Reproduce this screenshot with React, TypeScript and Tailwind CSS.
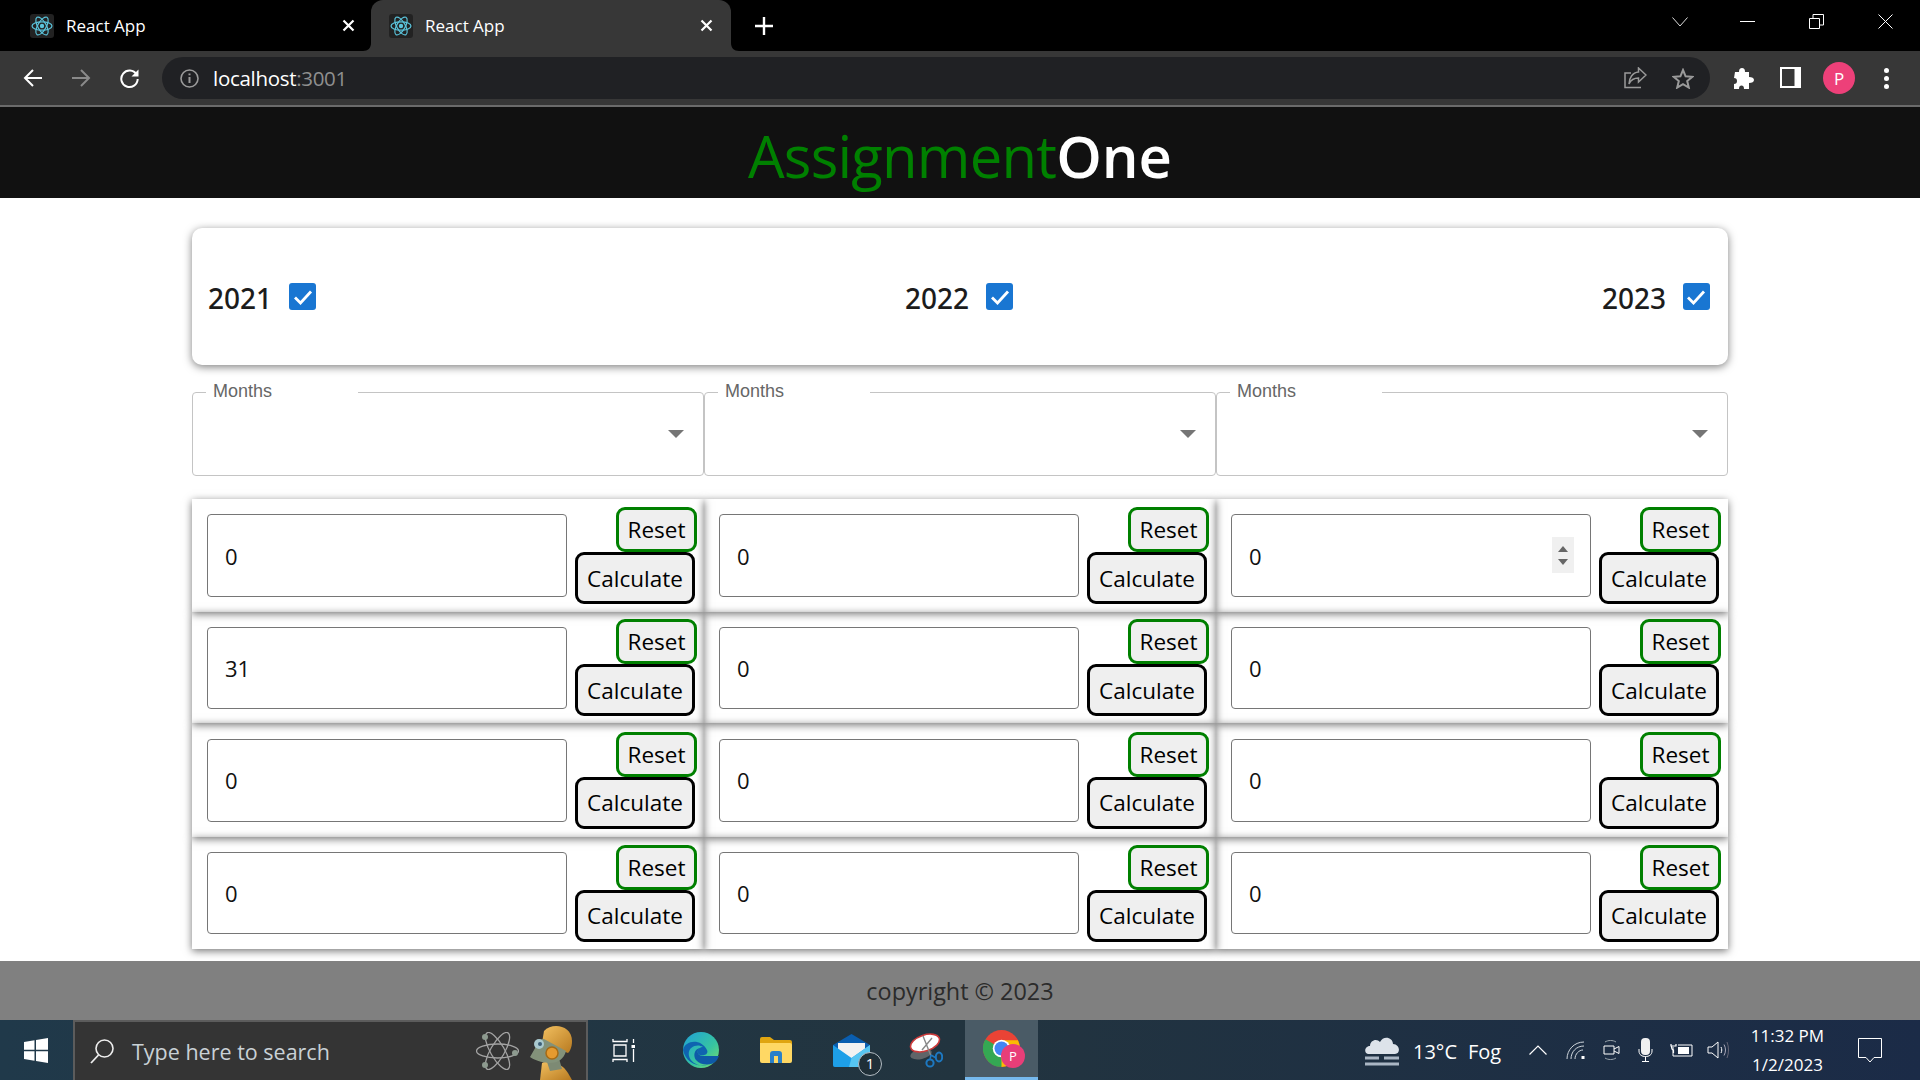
const sans = "font-['Open_Sans',sans-serif]";

function ReactIcon() {
  return (
    <svg width={24} height={24} viewBox="0 0 24 24" fill="none" className="shrink-0">
      <rect width={24} height={24} rx={3} fill="#222" />
      <g stroke="#5bc4dc" strokeWidth={1.2}>
        <ellipse cx={12} cy={12} rx={10} ry={4.2} />
        <ellipse cx={12} cy={12} rx={10} ry={4.2} transform="rotate(60 12 12)" />
        <ellipse cx={12} cy={12} rx={10} ry={4.2} transform="rotate(120 12 12)" />
      </g>
      <circle cx={12} cy={12} r={2.2} fill="#5bc4dc" />
    </svg>
  );
}

function CloseX() {
  return (
    <svg width={13} height={13} viewBox="0 0 13 13" className="shrink-0">
      <path d="M1.5 1.5L11.5 11.5M11.5 1.5L1.5 11.5" stroke="#fff" strokeWidth={2.2} />
    </svg>
  );
}

function TabBar() {
  return (
    <div className="flex h-[51px] bg-black text-white">
      <div className="flex w-[371px] items-center pl-[30px]">
        <ReactIcon />
        <span className="ml-3 w-[276px] text-[17px] leading-none">React App</span>
        <CloseX />
      </div>
      <div className="relative flex w-[360px] items-center rounded-t-[12px] bg-[#373737] pl-[18px]">
        <svg width={8} height={8} viewBox="0 0 8 8" className="absolute -left-2 bottom-0">
          <path d="M8 0V8H0C5 8 8 5 8 0Z" fill="#373737" />
        </svg>
        <svg width={8} height={8} viewBox="0 0 8 8" className="absolute -right-2 bottom-0">
          <path d="M0 0V8H8C3 8 0 5 0 0Z" fill="#373737" />
        </svg>
        <ReactIcon />
        <span className="ml-3 w-[275px] text-[17px] leading-none">React App</span>
        <CloseX />
      </div>
      <svg width={18} height={18} viewBox="0 0 18 18" className="ml-[24px] mt-[17px]">
        <path d="M9 0V18M0 9H18" stroke="#fff" strokeWidth={2.4} />
      </svg>
      <svg width={16} height={10} viewBox="0 0 16 10" className="ml-[899px] mt-[17px]" fill="none">
        <path d="M.5 .5L8 9L15.5 .5" stroke="#ddd" />
      </svg>
      <div className="ml-[52px] mt-[21px] h-[1px] w-[15px] bg-white" />
      <svg width={15} height={15} viewBox="0 0 15 15" className="ml-[54px] mt-[14px]" fill="none">
        <path d="M.5 4.5H10.5V14.5H.5ZM4 4V.5H14.5V11H11" stroke="#fff" />
      </svg>
      <svg width={15} height={15} viewBox="0 0 15 15" className="ml-[54px] mt-[14px]" fill="none">
        <path d="M.5 .5L14.5 14.5M14.5 .5L.5 14.5" stroke="#fff" />
      </svg>
    </div>
  );
}

function ToolBar() {
  return (
    <div className="flex h-[56px] items-start border-b-2 border-[#6b6b6b] bg-[#373737] pt-[6px]">
      <svg width={20} height={20} viewBox="0 0 20 20" className="ml-[23px] mt-[11px]" fill="none">
        <path d="M19 10H2M10 2L2 10L10 18" stroke="#fff" strokeWidth={2} />
      </svg>
      <svg width={20} height={20} viewBox="0 0 20 20" className="ml-[28px] mt-[11px]" fill="none">
        <path d="M1 10H18M10 2L18 10L10 18" stroke="#8a8a8a" strokeWidth={2} />
      </svg>
      <svg width={21} height={21} viewBox="0 0 21 21" className="ml-[28px] mt-[11px]" fill="none">
        <path d="M17.5 6.5A8.2 8.2 0 1 0 18.7 11" stroke="#fff" strokeWidth={2} />
        <path d="M19.5 1.5V8.5H12.5Z" fill="#fff" />
      </svg>
      <div className="ml-[22px] flex h-[42px] w-[1548px] items-center rounded-full bg-[#202124] pl-[18px]">
        <svg width={19} height={19} viewBox="0 0 19 19" fill="none">
          <circle cx={9.5} cy={9.5} r={8.5} stroke="#9a9a9a" strokeWidth={1.6} />
          <path d="M9.5 8V14M9.5 4.5V6.3" stroke="#9a9a9a" strokeWidth={2} />
        </svg>
        <span className="ml-[14px] w-[132px] whitespace-nowrap text-[20.5px] leading-none tracking-[-0.3px] text-white">
          localhost<span className="text-[#8f8f8f]">:3001</span>
        </span>
        <svg width={23} height={22} viewBox="0 0 23 22" className="ml-[1279px]" fill="none">
          <path d="M17 20.5H1V6H7" stroke="#9a9a9a" strokeWidth={1.5} />
          <path d="M14.5 1L22 8L14.5 15V11C10 11 7 12.5 5 17C5 11 8.5 5.5 14.5 5Z" stroke="#9a9a9a" strokeWidth={1.5} />
        </svg>
        <svg width={22} height={21} viewBox="0 0 22 21" className="ml-[25px]" fill="none">
          <path d="M11 2L13.6 8.3L20.3 8.8L15.2 13.1L16.8 19.6L11 16.1L5.2 19.6L6.8 13.1L1.7 8.8L8.4 8.3Z" stroke="#9a9a9a" strokeWidth={2} />
        </svg>
      </div>
      <svg width={22} height={21} viewBox="0 0 22 21" className="ml-[22px] mt-[11px]">
        <path d="M3 4H7C7 1 8 0 10 0S13 1 13 4H17V9C20 9 22 10 22 12S20 15 17 15V21H12C12 18 11 17.5 9.5 17.5S7 18 7 21H2V16C4 16 5 15 5 13S4 10 2 10Z" fill="#fff" />
      </svg>
      <svg width={21} height={21} viewBox="0 0 21 21" className="ml-[26px] mt-[10px]" fill="none">
        <path d="M1 1H20V20H1Z" stroke="#fff" strokeWidth={2} />
        <path d="M14.5 1V20H20V1Z" fill="#fff" />
      </svg>
      <div className="ml-[22px] mt-[5px] flex h-[32px] w-[32px] items-center justify-center rounded-full bg-[#ed4079] text-[17px] leading-none text-white">
        P
      </div>
      <div className="ml-[29px] mt-[11px] flex flex-col gap-[3.5px]">
        <div className="h-[4.5px] w-[4.5px] rounded-full bg-white" />
        <div className="h-[4.5px] w-[4.5px] rounded-full bg-white" />
        <div className="h-[4.5px] w-[4.5px] rounded-full bg-white" />
      </div>
    </div>
  );
}

function YearToggle({ year }: { year: string }) {
  return (
    <label className="flex items-center gap-[17px]">
      <span className="pt-[2px] font-['Noto_Sans',sans-serif] text-[28px] font-medium leading-none text-[#1c1c1c]">
        {year}
      </span>
      <span className="flex h-[27px] w-[27px] items-center justify-center rounded-[3px] bg-[#1976d2]">
        <svg width={20} height={16} viewBox="0 0 20 16" fill="none">
          <path d="M2 8.5L7.5 14L18 2.5" stroke="#fff" strokeWidth={2.8} />
        </svg>
      </span>
    </label>
  );
}

function MonthSelect() {
  return (
    <fieldset className="h-[95px] min-w-0 rounded-[4px] border border-[#c4c4c4]">
      <legend className="ml-[13px] h-[22px] w-[152px] pl-[7px] font-['Liberation_Sans',sans-serif] text-[18px] leading-[20px] text-[#666]">
        Months
      </legend>
      <div className="flex h-[72px] items-center justify-end pb-[10px] pr-[19px]">
        <svg width={16} height={8} viewBox="0 0 16 8">
          <path d="M0 0H16L8 8Z" fill="#757575" />
        </svg>
      </div>
    </fieldset>
  );
}

function Cell({ value, spinner, tall }: { value: string; spinner?: boolean; tall?: boolean }) {
  return (
    <div className="flex items-center justify-between pl-[15px] pr-[7px] shadow-[0_2px_8px_rgba(0,0,0,0.55)]">
      <div className="relative">
        <input
          type="text"
          readOnly
          defaultValue={value}
          className={`block w-[360px] rounded-[4px] border border-[#767676] pl-[17px] text-[22px] text-[#111] outline-none ${tall ? "h-[83px]" : "h-[82px]"}`}
        />
        {spinner && (
          <div className="absolute right-[17px] top-[23px] flex h-[36px] w-[22px] flex-col items-center justify-center gap-[7px] bg-[#f0f0f0]">
            <svg width={10} height={6} viewBox="0 0 10 6">
              <path d="M0 6L5 0L10 6Z" fill="#666" />
            </svg>
            <svg width={10} height={6} viewBox="0 0 10 6">
              <path d="M0 0L5 6L10 0Z" fill="#666" />
            </svg>
          </div>
        )}
      </div>
      <div className="flex flex-col items-end">
        <button className="h-[45px] w-[81px] rounded-[9px] border-[3px] border-[#008000] bg-[#efefef] pt-[2px] text-[22.5px] leading-none text-black">
          Reset
        </button>
        <button className="mr-[2px] h-[52px] w-[120px] rounded-[9px] border-[3px] border-black bg-[#efefef] pt-[2px] text-[22.5px] leading-none text-black">
          Calculate
        </button>
      </div>
    </div>
  );
}

function Edge() {
  return (
    <svg width={36} height={36} viewBox="0 0 36 36">
      <defs>
        <linearGradient id="edgeA" x1="0" y1="0" x2="1" y2="1">
          <stop offset="0" stopColor="#1fa0d8" />
          <stop offset="0.6" stopColor="#37c4a0" />
          <stop offset="1" stopColor="#7ee06a" />
        </linearGradient>
      </defs>
      <circle cx={18} cy={18} r={18} fill="url(#edgeA)" />
      <path d="M0 18C2 8 18 6 24 18C26 23 20 24 17 23C12 21 15 15 20 15C14 11 4 15 6 24C8 32 20 38 32 29C24 36 4 36 0 18Z" fill="#0f63b0" />
      <path d="M36 24H20C14 24 13 18 17 16C11 17 10 24 13 28C18 34 30 34 34 28Z" fill="#0e5aa8" />
    </svg>
  );
}

function Folder() {
  return (
    <svg width={32} height={26} viewBox="0 0 32 26">
      <path d="M0 2Q0 0 2 0H10L14 3H30Q32 3 32 5V10H0Z" fill="#e0a510" />
      <path d="M0 6H30Q32 6 32 8V24Q32 26 30 26H2Q0 26 0 24Z" fill="#ffd864" />
      <path d="M10 26V17Q10 14 13 14H19Q22 14 22 17V26H18V19H14V26Z" fill="#2a80c8" />
    </svg>
  );
}

function Mail() {
  return (
    <div className="relative h-[33px] w-[37px]">
      <svg width={37} height={33} viewBox="0 0 37 33">
        <path d="M0 11L18.5 0L37 11V31Q37 33 35 33H2Q0 33 0 31Z" fill="#0a5eb0" />
        <path d="M5 9H32V18L18.5 25L5 18Z" fill="#f2f2f2" />
        <path d="M0 11L18.5 24L37 11V31Q37 33 35 33H2Q0 33 0 31Z" fill="#1e9fe8" />
        <path d="M37 11V31Q37 33 35 33H16L18.5 24Z" fill="#56c5f2" />
      </svg>
      <div className="absolute -bottom-[9px] -right-[12px] flex h-[24px] w-[24px] items-center justify-center rounded-full border border-[#b5bec5] bg-[#1f2f38] text-[15px] leading-none text-white">
        1
      </div>
    </div>
  );
}

function Snip() {
  return (
    <svg width={34} height={35} viewBox="0 0 34 35" fill="none">
      <ellipse cx={12} cy={21} rx={11} ry={5} fill="#5f6468" transform="rotate(-12 12 21)" />
      <ellipse cx={16} cy={10} rx={15} ry={8} fill="#fff" stroke="#cc3a3a" strokeWidth={1.6} transform="rotate(-18 16 10)" />
      <path d="M14 3L22 23M23 5L13 17" stroke="#888" strokeWidth={1.4} />
      <circle cx={21} cy={30} r={3.6} stroke="#1d78c1" strokeWidth={2} />
      <ellipse cx={30} cy={24} rx={3.2} ry={4.6} stroke="#1d78c1" strokeWidth={2} />
      <path d="M21 26L22 22M27 25L22 22" stroke="#1d78c1" strokeWidth={1.5} />
    </svg>
  );
}

function Chrome() {
  return (
    <div className="relative h-[37px] w-[37px]">
      <svg width={37} height={37} viewBox="0 0 36 36">
        <circle cx={18} cy={18} r={18} fill="#ea4335" />
        <path d="M18 18L2.4 9A18 18 0 0 0 18 36L26 23Z" fill="#34a853" />
        <path d="M18 10H34A18 18 0 0 1 18 36Z" fill="#fbbc04" />
        <circle cx={18} cy={18} r={8.5} fill="#fff" />
        <circle cx={18} cy={18} r={6.8} fill="#4285f4" />
      </svg>
      <div className="absolute -bottom-[1px] -right-[5px] flex h-[24px] w-[24px] items-center justify-center rounded-full bg-[#e83e78] text-[13px] leading-none text-white">
        P
      </div>
    </div>
  );
}

function Robot() {
  return (
    <svg width={50} height={55} viewBox="0 0 50 55" className="ml-[9px] self-end">
      <defs>
        <linearGradient id="robotA" x1="0" y1="0" x2="1" y2="1">
          <stop offset="0" stopColor="#f2c060" />
          <stop offset="1" stopColor="#b87a20" />
        </linearGradient>
      </defs>
      <path d="M14 38C22 34 34 38 40 48L44 55H12Z" fill="url(#robotA)" />
      <path d="M18 34L30 30L34 44L22 46Z" fill="#7d8a74" />
      <path d="M16 6C24 -3 44 0 44 16C44 22 42 26 40 28L14 18Z" fill="url(#robotA)" />
      <path d="M10 18C12 14 14 14 16 14L38 26C36 34 30 38 22 38C14 38 4 34 2 32Z" fill="#83927a" />
      <circle cx={11} cy={19} r={5} fill="#a9c9cf" />
      <circle cx={12} cy={19} r={2} fill="#3d5f78" />
      <circle cx={24} cy={28} r={6} fill="#e59a2f" stroke="#a66a14" strokeWidth={1.5} />
    </svg>
  );
}

function Atom() {
  return (
    <svg width={43} height={38} viewBox="0 0 43 38" fill="none">
      <g stroke="#a3a3a3" strokeWidth={1.3}>
        <ellipse cx={21.5} cy={19} rx={21} ry={7} transform="rotate(60 21.5 19)" />
        <ellipse cx={21.5} cy={19} rx={21} ry={7} transform="rotate(120 21.5 19)" />
        <ellipse cx={21.5} cy={19} rx={21} ry={7} />
      </g>
      <circle cx={9} cy={5} r={3} fill="#8d9a8f" />
      <circle cx={39} cy={21} r={3} fill="#8d9a8f" />
      <circle cx={9} cy={33} r={3} fill="#8d9a8f" />
    </svg>
  );
}

function Taskbar() {
  return (
    <div className="flex h-[60px] items-center bg-linear-to-r from-[#20394a] via-[#22343f] to-[#1b2b47] text-white">
      <div className="flex w-[73px] justify-center">
        <svg width={24} height={25} viewBox="0 0 24 25" className="mr-[1px]">
          <path d="M0 4L10.5 2.3V11.8H0ZM12 2L24 0V11.8H12ZM0 13.2H10.5V22.7L0 21ZM12 13.2H24V25L12 23Z" fill="#fff" />
        </svg>
      </div>
      <div className="flex h-[60px] w-[515px] items-center border-2 border-b-0 border-[#5c5c5c] bg-[#343434] pl-[15px]">
        <svg width={24} height={25} viewBox="0 0 24 25" fill="none">
          <circle cx={14.5} cy={9.5} r={8.5} stroke="#eee" strokeWidth={1.6} />
          <path d="M8.5 16L1 24" stroke="#eee" strokeWidth={1.8} />
        </svg>
        <span className="ml-[18px] w-[344px] pt-[2px] text-[21.5px] leading-none text-[#c9d1d6]">Type here to search</span>
        <Atom />
        <Robot />
      </div>
      <svg width={23} height={23} viewBox="0 0 23 23" className="ml-[24px]" fill="none">
        <path d="M1 0V2.5H15V0M2 6H14V17H2ZM1 23V20.5H15V23" stroke="#fff" strokeWidth={1.3} />
        <path d="M21.5 0V4M21.5 10V23" stroke="#fff" strokeWidth={1.3} />
        <rect x={19.5} y={6} width={4} height={3} fill="#fff" />
      </svg>
      <div className="ml-[48px]">
        <Edge />
      </div>
      <div className="ml-[41px]">
        <Folder />
      </div>
      <div className="ml-[41px]">
        <Mail />
      </div>
      <div className="ml-[39px]">
        <Snip />
      </div>
      <div className="ml-[22px] flex h-[60px] w-[73px] items-center justify-center border-b-[3px] border-[#76b9ed] bg-[#4a5b66]">
        <Chrome />
      </div>
      <svg width={36} height={35} viewBox="0 0 36 35" className="ml-[326px]">
        <path d="M4 21C0 21 0 13 6 13C6 7 13 5 16 9C19 2 29 4 29 11C36 11 37 21 31 21Z" fill="#dde3ea" />
        <path d="M1 25H15M20 25H35M1 31H35" stroke="#aab6c4" strokeWidth={2.8} />
      </svg>
      <span className="ml-[13px] w-[42px] whitespace-nowrap pt-[3px] text-[20px] leading-none">13°C</span>
      <span className="ml-[13px] w-[34px] pt-[3px] text-[20px] leading-none">Fog</span>
      <svg width={18} height={10} viewBox="0 0 18 10" className="ml-[27px]" fill="none">
        <path d="M.5 9.5L9 1L17.5 9.5" stroke="#fff" strokeWidth={1.2} />
      </svg>
      <svg width={19} height={18} viewBox="0 0 19 18" className="ml-[19px]" fill="none">
        <path d="M1 18C1 9 8 1 18 1M5 18C5 11 10 5 18 5M9 18C9 13 13 9 17 9" stroke="#cfd6dc" strokeWidth={1} />
        <rect x={15.5} y={15} width={3} height={3} fill="#fff" />
      </svg>
      <svg width={17} height={22} viewBox="0 0 17 22" className="ml-[18px]" fill="none">
        <path d="M1 7H11V15H1ZM11 10L16 7.5V14.5L11 12" stroke="#fff" strokeWidth={1} />
        <path d="M2 3C5 1 10 1 13 3M2 19C5 21 10 21 13 19" stroke="#9aa5ad" strokeWidth={1} />
      </svg>
      <svg width={15} height={24} viewBox="0 0 15 24" className="ml-[18px]" fill="none">
        <rect x={3} y={0} width={9} height={17} rx={4} fill="#f0f0f0" />
        <path d="M1 11V13C1 17 4 18.5 7.5 18.5S14 17 14 13V11M7.5 18.5V23M4 23.5H11" stroke="#fff" strokeWidth={1} />
      </svg>
      <svg width={24} height={14} viewBox="0 0 24 14" className="ml-[17px]" fill="none">
        <path d="M3 4V13H22V2H8" stroke="#fff" strokeWidth={1} />
        <rect x={8} y={4} width={11} height={7} fill="#fff" />
        <path d="M1 1V3H6V1M1.5 3C1.5 6 2.5 7 3.5 7V10" stroke="#fff" strokeWidth={1.2} />
      </svg>
      <svg width={22} height={18} viewBox="0 0 22 18" className="ml-[13px]" fill="none">
        <path d="M1 6H5L11 1V17L5 12H1Z" stroke="#fff" strokeWidth={1} />
        <path d="M14 6C15 8 15 10 14 12" stroke="#fff" strokeWidth={1} />
        <path d="M17 3.5C19 7 19 11 17 14.5" stroke="#aab" strokeWidth={1} />
        <path d="M20 1C22 6 22 12 20 17" stroke="#667" strokeWidth={1} />
      </svg>
      <div className="ml-[22px] flex w-[73px] flex-col items-center gap-[9px] text-[17px] leading-[20px]">
        <span className="whitespace-nowrap">11:32 PM</span>
        <span>1/2/2023</span>
      </div>
      <svg width={24} height={25} viewBox="0 0 24 25" className="ml-[34px]" fill="none">
        <path d="M.5 .5H23.5V19.5H16L12 24L8 19.5H.5Z" stroke="#fff" strokeWidth={1} />
      </svg>
    </div>
  );
}

export default function App() {
  return (
    <div className={`flex h-[1080px] w-[1920px] flex-col overflow-hidden bg-white ${sans}`}>
      <TabBar />
      <ToolBar />
      <header className="flex h-[91px] items-center justify-center bg-[#111] pt-[6px] text-[58px] leading-none">
        <span className="font-normal tracking-[-0.8px] text-[#008000]">Assignment</span>
        <span className="font-semibold text-white">One</span>
      </header>
      <main className="flex-1 px-[192px] pt-[30px]">
        <div className="flex h-[137px] items-center justify-between rounded-[10px] pl-4 pr-[18px] shadow-[0_2px_8px_rgba(0,0,0,0.5)]">
          <YearToggle year="2021" />
          <YearToggle year="2022" />
          <YearToggle year="2023" />
        </div>
        <div className="mt-4 grid grid-cols-3">
          <MonthSelect />
          <MonthSelect />
          <MonthSelect />
        </div>
        <div className="mt-[23px] grid grid-cols-3 grid-rows-[113px_111px_114px_112px]">
          <Cell value="0" tall />
          <Cell value="0" tall />
          <Cell value="0" tall spinner />
          <Cell value="31" />
          <Cell value="0" />
          <Cell value="0" />
          <Cell value="0" tall />
          <Cell value="0" tall />
          <Cell value="0" tall />
          <Cell value="0" />
          <Cell value="0" />
          <Cell value="0" />
        </div>
      </main>
      <footer className="flex h-[59px] items-center justify-center bg-[#808080] pt-[3px] text-[23.4px] text-[#2b2b2b]">
        copyright © 2023
      </footer>
      <Taskbar />
    </div>
  );
}
